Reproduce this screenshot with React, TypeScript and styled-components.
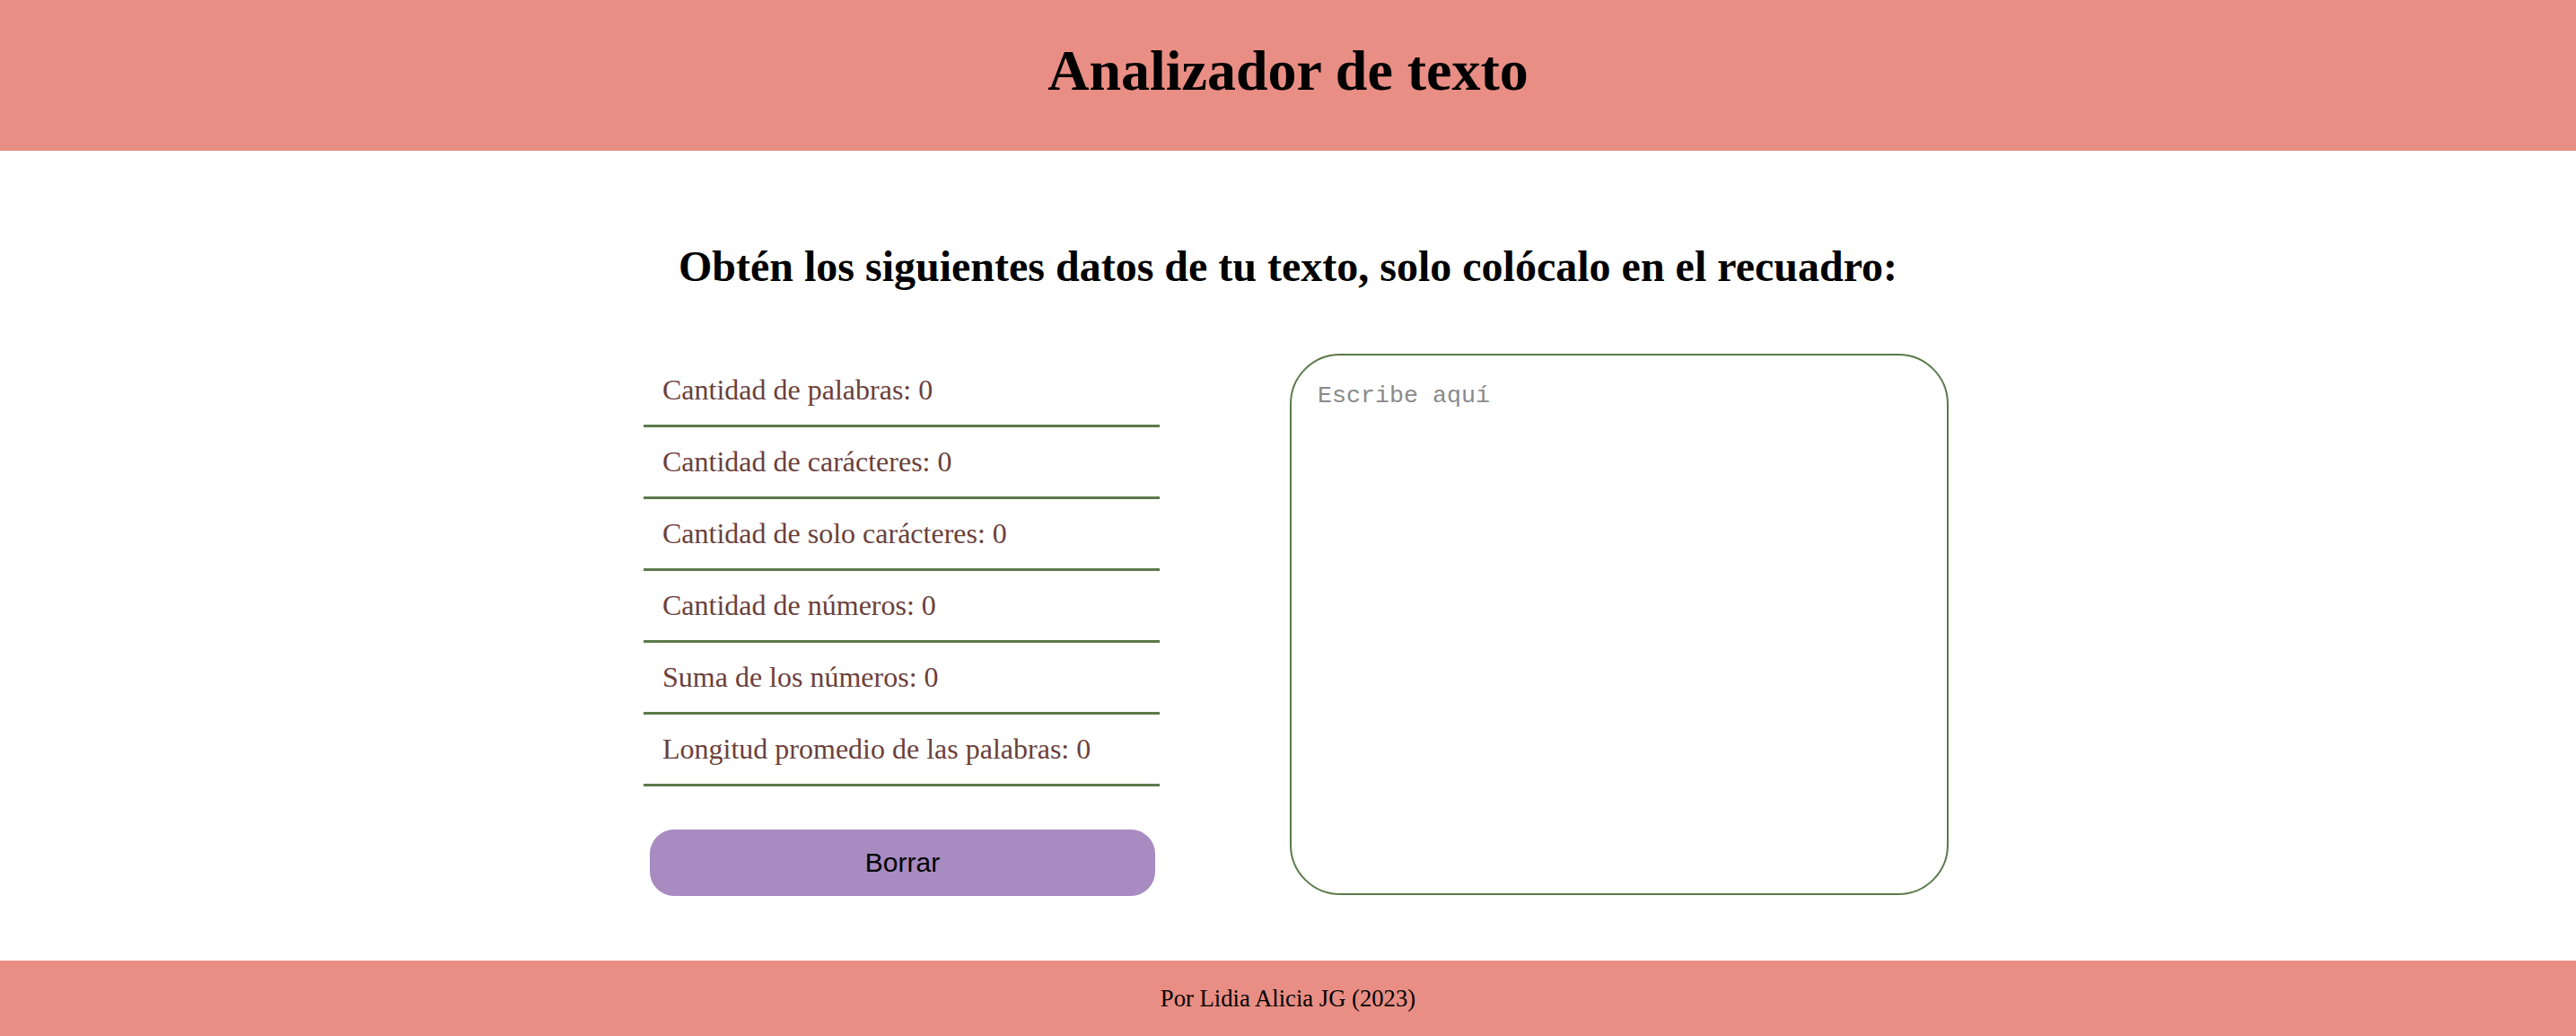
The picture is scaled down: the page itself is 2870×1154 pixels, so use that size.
import React, { useState } from "react";
import styled, { createGlobalStyle } from "styled-components";

const GlobalStyle = createGlobalStyle`
  html, body { margin: 0; padding: 0; background: #ffffff; }
  body { font-family: "Liberation Serif", "Times New Roman", serif; }
  * { box-sizing: border-box; }
`;

const Page = styled.div`
  display: flex;
  flex-direction: column;
  min-height: 1154px;
`;

const Header = styled.header`
  height: 168px;
  background: #e98e84;
  padding-top: 42px;
`;

const Title = styled.h1`
  margin: 0;
  text-align: center;
  font-size: 64px;
  font-weight: bold;
  line-height: normal;
  color: #000;
`;

const Main = styled.main`
  flex: 1;
  display: flex;
  flex-direction: column;
  align-items: center;
  padding-top: 101px;
`;

const Subtitle = styled.h2`
  margin: 0;
  font-size: 48px;
  font-weight: bold;
  line-height: normal;
  color: #000;
  text-align: center;
`;

const Content = styled.div`
  display: flex;
  gap: 145px;
  margin-top: 70px;
  padding-left: 18px;
`;

const Left = styled.div`
  width: 575px;
  display: flex;
  flex-direction: column;
`;

const StatList = styled.ul`
  list-style: none;
  margin: 2px 0 0;
  padding: 0;
`;

const StatRow = styled.li`
  height: 80px;
  display: flex;
  align-items: center;
  padding-left: 21px;
  border-bottom: 3px solid #5b7a4b;
  font-size: 32px;
  color: #6b403b;
`;

const ClearButton = styled.button`
  align-self: center;
  width: 563px;
  height: 74px;
  margin-top: 48px;
  margin-left: 2px;
  border: none;
  border-radius: 27px;
  background: #a78bc1;
  color: #000;
  font-family: "Liberation Sans", Arial, sans-serif;
  font-size: 30px;
  cursor: pointer;
`;

const TextBox = styled.textarea`
  width: 734px;
  height: 603px;
  border: 2px solid #5b7a4b;
  border-radius: 56px;
  padding: 30px 29px;
  font-family: "Liberation Mono", "Courier New", monospace;
  font-size: 26.67px;
  resize: none;
  outline: none;
  background: #fff;
  &::placeholder { color: #8a8a8a; }
`;

const Footer = styled.footer`
  height: 84px;
  background: #e98e84;
  display: flex;
  align-items: center;
  justify-content: center;
  font-size: 26.67px;
  color: #000;
`;

export default function App() {
  const [text, setText] = useState("");
  const words = text.trim() ? text.trim().split(/\s+/) : [];
  const nums = text.match(/\d+(\.\d+)?/g) || [];
  const sum = nums.reduce((a, n) => a + parseFloat(n), 0);
  const avg = words.length
    ? Math.round((words.reduce((a, w) => a + w.length, 0) / words.length) * 100) / 100
    : 0;
  const stats = [
    ["Cantidad de palabras", words.length],
    ["Cantidad de carácteres", text.length],
    ["Cantidad de solo carácteres", text.replace(/[^a-zA-ZáéíóúÁÉÍÓÚñÑ]/g, "").length],
    ["Cantidad de números", nums.length],
    ["Suma de los números", sum],
    ["Longitud promedio de las palabras", avg],
  ];
  return (
    <Page>
      <GlobalStyle />
      <Header>
        <Title>Analizador de texto</Title>
      </Header>
      <Main>
        <Subtitle>Obtén los siguientes datos de tu texto, solo colócalo en el recuadro:</Subtitle>
        <Content>
          <Left>
            <StatList>
              {stats.map(([label, value]) => (
                <StatRow key={label as string}>
                  {label}: {value}
                </StatRow>
              ))}
            </StatList>
            <ClearButton onClick={() => setText("")}>Borrar</ClearButton>
          </Left>
          <TextBox
            placeholder="Escribe aquí"
            value={text}
            onChange={(e) => setText(e.target.value)}
          />
        </Content>
      </Main>
      <Footer>Por Lidia Alicia JG (2023)</Footer>
    </Page>
  );
}
